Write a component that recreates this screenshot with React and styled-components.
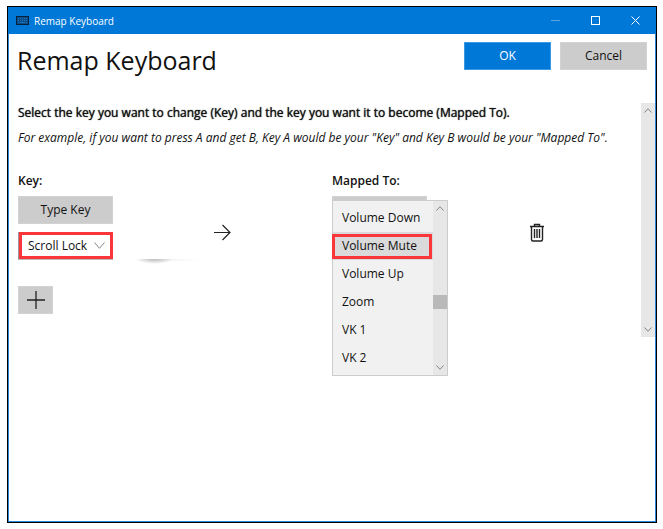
import React from "react";
import styled, { createGlobalStyle } from "styled-components";

const GlobalStyle = createGlobalStyle`
  *, *::before, *::after { box-sizing: border-box; }
  body {
    margin: 0;
    background: #fff;
    color: #111;
    font-family: "Open Sans", "Noto Sans", sans-serif;
    font-size: 12px;
    line-height: 16px;
  }
  h1, h2, p, ul { margin: 0; padding: 0; }
  button, select { font: inherit; color: inherit; border-radius: 0; }
  svg { display: block; flex: none; }
`;

const Page = styled.div`
  min-height: 100vh;
  padding: 6px 6px 6px 7px;
  display: flex;
`;

const Window = styled.div`
  flex: 1;
  min-width: 0;
  display: flex;
  flex-direction: column;
  border: 1px solid #000;
  box-shadow: inset 0 0 0 1px #2b88d8;
`;

const TitleBar = styled.div`
  height: 27px;
  padding: 0 1px 0 8px;
  display: flex;
  align-items: center;
  background: #0078d7;
  color: #fff;
`;

const WindowTitle = styled.span`
  flex: 1;
  margin-left: 5px;
  font-size: 10px;
`;

const CaptionButton = styled.button`
  width: 40px;
  height: 27px;
  padding: 0;
  border: 0;
  display: flex;
  align-items: center;
  justify-content: center;
  background: transparent;
  color: #fff;
  opacity: ${(p) => (p.$dim ? 0.35 : 1)};
`;

const Header = styled.header`
  display: flex;
  align-items: flex-start;
  gap: 9px;
  padding: 8px 9px 0 9px;
`;

const Heading = styled.h1`
  flex: 1;
  font-size: 25px;
  line-height: 37px;
  font-weight: 400;
`;

const Button = styled.button`
  width: ${(p) => p.$width}px;
  height: 28px;
  padding: 0;
  border: 1px solid ${(p) => (p.$primary ? "#3d98e2" : "#d2d2d2")};
  display: flex;
  align-items: center;
  justify-content: center;
  background: ${(p) => (p.$primary ? "#0078d7" : "#ccc")};
  color: ${(p) => (p.$primary ? "#fff" : "#111")};
`;

const ScrollArea = styled.main`
  display: flex;
  height: 234px;
  margin: 24px 1px 0 10px;
`;

const Content = styled.div`
  flex: 1;
  min-width: 0;
`;

const Lead = styled.p`
  padding-top: 2px;
  font-weight: 500;
  text-shadow: 0 0 1px #111;
  white-space: nowrap;
`;

const Example = styled.p`
  margin-top: 9px;
  font-style: italic;
  white-space: nowrap;
`;

const MappingGrid = styled.div`
  display: grid;
  grid-template-columns: 195fr 119fr 196fr 113fr;
  margin: 26px 0 26px;
`;

const ColumnTitle = styled.h2`
  margin-top: 1px;
  margin-bottom: -1px;
  font-size: 12px;
  line-height: 16px;
  font-weight: 600;
`;

const Cell = styled.div`
  position: relative;
  display: flex;
  flex-direction: column;
  align-items: flex-start;
  gap: 8px;
`;

const IconCell = styled.div`
  display: flex;
  align-items: flex-start;
  padding-top: ${(p) => p.$top}px;
`;

const SelectFrame = styled.div`
  position: relative;
  width: 95px;
  height: 28px;
  border-left: 1px solid #999;
  border-bottom: 1px solid #bbb;
  background: #fff;
`;

const KeySelect = styled.select`
  width: 100%;
  height: 27px;
  padding: 0 0 0 6px;
  border: 3px solid #fb363b;
  background: #fff;
  appearance: none;
`;

const SelectChevron = styled.span`
  position: absolute;
  right: 8px;
  top: 10px;
  pointer-events: none;
`;

const Smudge = styled.span`
  position: absolute;
  left: 110px;
  top: 87px;
  width: 74px;
  height: 6px;
  background: radial-gradient(ellipse 18px 5px at 36% 0, #bbb, transparent),
    radial-gradient(ellipse 37px 3px at 50% 0, #eee, transparent);
`;

const Menu = styled.div`
  position: absolute;
  top: 28px;
  left: 0;
  width: 116px;
  height: 176px;
  display: flex;
  border: 1px solid #ccc;
  background: #f1f1f1;
`;

const MenuList = styled.ul`
  flex: 1;
  padding-top: 3px;
  list-style: none;
`;

const MenuItem = styled.li`
  height: 28px;
  padding-left: 9px;
  line-height: 28px;
  background: ${(p) => (p.$selected ? "#dadada" : "transparent")};
`;

const Highlight = styled.span`
  position: absolute;
  left: -1px;
  top: 33px;
  width: 100px;
  height: 25px;
  border: 3px solid #fb363b;
  pointer-events: none;
`;

const Scrollbar = styled.div`
  width: 14px;
  display: flex;
  flex-direction: column;
  justify-content: space-between;
  align-items: center;
  padding: 5px 0;
  background: #e7e7e7;
  color: #888;
`;

const Thumb = styled.div`
  width: 14px;
  height: 14px;
  margin-top: 27px;
  background: #b9b9b9;
`;

const IconButton = styled.button`
  padding: 0;
  border: 0;
  background: transparent;
`;

const Chevron = ({ width, height, up }) => (
  <svg width={width} height={height} viewBox={`0 0 ${width} ${height}`} fill="none" stroke="#858585">
    <path
      d={
        up
          ? `M.5 ${height - 0.5}L${width / 2} .7L${width - 0.5} ${height - 0.5}`
          : `M.5 .5L${width / 2} ${height - 0.7}L${width - 0.5} .5`
      }
    />
  </svg>
);

const KeyboardIcon = () => (
  <svg width="13" height="9" viewBox="0 0 13 9">
    <rect x=".5" y=".5" width="12" height="8" fill="#0b4b86" stroke="#06213d" />
    <path d="M2 2.5h9M2 4.5h9" stroke="#1674c4" strokeDasharray="1 1" />
    <path d="M2 6.5h1M4 6.5h5M10 6.5h1" stroke="#1674c4" />
  </svg>
);

const options = ["Volume Down", "Volume Mute", "Volume Up", "Zoom", "VK 1", "VK 2"];

export default function App() {
  return (
    <Page>
      <GlobalStyle />
      <Window>
        <TitleBar>
          <KeyboardIcon />
          <WindowTitle>Remap Keyboard</WindowTitle>
          <CaptionButton aria-label="Minimize" $dim>
            <svg width="9" height="9" stroke="currentColor"><path d="M0 4.5h9" /></svg>
          </CaptionButton>
          <CaptionButton aria-label="Maximize">
            <svg width="9" height="9" fill="none" stroke="currentColor"><rect x=".5" y=".5" width="8" height="8" /></svg>
          </CaptionButton>
          <CaptionButton aria-label="Close">
            <svg width="9" height="9" stroke="currentColor"><path d="M.5 .5l8 8M8.5 .5l-8 8" /></svg>
          </CaptionButton>
        </TitleBar>

        <Header>
          <Heading>Remap Keyboard</Heading>
          <Button $primary $width={87}>OK</Button>
          <Button $width={87}>Cancel</Button>
        </Header>

        <ScrollArea>
          <Content>
            <Lead>Select the key you want to change (Key) and the key you want it to become (Mapped To).</Lead>
            <Example>
              For example, if you want to press A and get B, Key A would be your "Key" and Key B would be your "Mapped To".
            </Example>
            <MappingGrid>
              <Cell>
                <ColumnTitle id="key-title">Key:</ColumnTitle>
                <Button $width={95}>Type Key</Button>
                <SelectFrame>
                  <KeySelect aria-labelledby="key-title" defaultValue="Scroll Lock">
                    <option>Scroll Lock</option>
                  </KeySelect>
                  <SelectChevron><Chevron width={11} height={7} /></SelectChevron>
                </SelectFrame>
                <Smudge />
              </Cell>
              <IconCell $top={52}>
                <svg width="18" height="17" viewBox="0 0 18 17" fill="none" stroke="#222" strokeWidth="1.2">
                  <path d="M1 8.5h16.5M9.5 1l7.5 7.5L9.5 16" />
                </svg>
              </IconCell>
              <Cell>
                <ColumnTitle id="mapped-title">Mapped To:</ColumnTitle>
                <Button $width={95} aria-label="Type mapped key" />
                <Menu>
                  <MenuList role="listbox" aria-labelledby="mapped-title">
                    {options.map((name) => (
                      <MenuItem
                        key={name}
                        role="option"
                        aria-selected={name === "Volume Mute"}
                        $selected={name === "Volume Mute"}
                      >
                        {name}
                      </MenuItem>
                    ))}
                  </MenuList>
                  <Scrollbar>
                    <Chevron width={8} height={5} up />
                    <Thumb />
                    <Chevron width={8} height={5} />
                  </Scrollbar>
                  <Highlight />
                </Menu>
              </Cell>
              <IconCell $top={51}>
                <IconButton aria-label="Delete mapping">
                  <svg width="17" height="19" viewBox="0 0 17 19" fill="none" stroke="#222" strokeWidth="1.4">
                    <path d="M2 3.5h14M6.5 3.5v-2h5v2M3.5 3.5v13q0 1.5 1.5 1.5h8q1.5 0 1.5-1.5v-13" />
                    <path d="M6.5 6v9M9 6v9M11.5 6v9" />
                  </svg>
                </IconButton>
              </IconCell>
            </MappingGrid>
            <Button $width={35} aria-label="Add mapping">
              <svg width="18" height="18" stroke="#222" strokeWidth="1.3"><path d="M0 9h18M9 0v18" /></svg>
            </Button>
          </Content>
          <Scrollbar>
            <Chevron width={8} height={5} up />
            <Chevron width={8} height={5} />
          </Scrollbar>
        </ScrollArea>
      </Window>
    </Page>
  );
}
